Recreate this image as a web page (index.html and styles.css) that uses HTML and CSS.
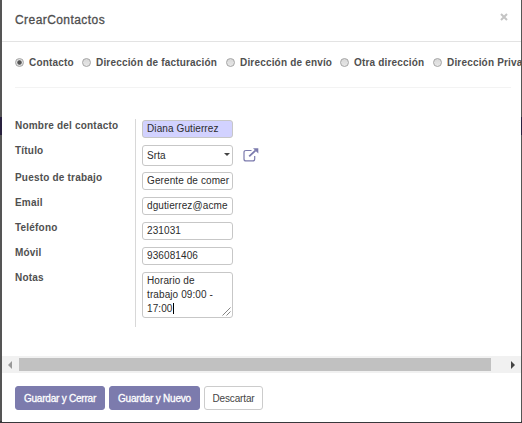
FILE: index.html
```html
<!DOCTYPE html>
<html lang="es">
<head>
<meta charset="utf-8">
<title>CrearContactos</title>
<link rel="stylesheet" href="styles.css">
</head>
<body>
<div class="modal">
  <header class="modal-header">
    <h1>CrearContactos</h1>
    <button class="close" aria-label="Cerrar"><svg width="8" height="8" viewBox="0 0 8 8"><path d="M1 1l6 6M7 1L1 7"/></svg></button>
  </header>
  <main class="modal-body">
    <div class="types">
      <label class="type t1"><i class="radio checked"></i><span>Contacto</span></label>
      <label class="type t2"><i class="radio"></i><span>Dirección de facturación</span></label>
      <label class="type t3"><i class="radio"></i><span>Dirección de envío</span></label>
      <label class="type t4"><i class="radio"></i><span>Otra dirección</span></label>
      <label class="type t5"><i class="radio"></i><span>Dirección Priva</span></label>
    </div>
    <div class="rule"></div>
    <div class="form">
      <div class="labels">
        <label>Nombre del contacto</label>
        <label class="tall">Título</label>
        <label>Puesto de trabajo</label>
        <label>Email</label>
        <label>Teléfono</label>
        <label>Móvil</label>
        <label>Notas</label>
      </div>
      <div class="fields">
        <div class="field required">Diana Gutierrez</div>
        <div class="select-row">
          <div class="field select"><span>Srta</span><i class="caret"></i></div>
          <svg class="external" width="16" height="14" viewBox="0 0 16 14"><path class="box" d="M8.5 2.5H3Q1 2.5 1 4.5V10.9Q1 12.9 3 12.9H9.7Q11.7 12.9 11.7 10.9V8"/><path class="shaft" d="M6.2 8.3L12.6 2.4"/><path class="head" d="M10 0.3H15.3V5.6Z"/></svg>
        </div>
        <div class="field">Gerente de comer</div>
        <div class="field">dgutierrez@acme</div>
        <div class="field">231031</div>
        <div class="field">936081406</div>
        <div class="field notes">Horario de<br>trabajo 09:00 -<br>17:00<i class="cursor"></i><svg class="grip" width="9" height="9" viewBox="0 0 9 9"><path d="M.5 8.5l8-8M4.5 8.5l4-4"/></svg></div>
      </div>
    </div>
  </main>
  <div class="scrollbar"><i class="arrow left"></i><div class="thumb"></div><i class="arrow right"></i></div>
  <footer class="modal-footer">
    <button class="btn primary b1">Guardar y Cerrar</button>
    <button class="btn primary b2">Guardar y Nuevo</button>
    <button class="btn b3">Descartar</button>
  </footer>
</div>
</body>
</html>
```
FILE: styles.css
```css
* { box-sizing: border-box; }
body {
  margin: 0;
  padding: 0 1px 1px 2px;
  height: 423px;
  overflow: hidden;
  background: linear-gradient(#555 0 117px, #29213f 117px 135px, #555 135px 421px, #38383b 421px);
  font-family: "Liberation Sans", Arial, sans-serif;
  color: #505050;
}
.modal {
  height: 422px;
  display: flex;
  flex-direction: column;
  background: #fff;
  overflow: hidden;
}
.modal-header {
  height: 42px;
  flex: none;
  display: flex;
  justify-content: space-between;
  padding: 12px 13px 0;
  border-bottom: 1px solid #e3e3e3;
}
h1 {
  margin: 0;
  font-size: 12px;
  line-height: 16px;
  font-weight: 400;
  letter-spacing: .43px;
  -webkit-text-stroke: .3px #4c4c4c;
}
.close {
  width: 8px;
  height: 8px;
  margin: 1px 0 0;
  padding: 0;
  border: 0;
  background: none;
  display: flex;
}
.close path { stroke: #c4c4c4; stroke-width: 2; fill: none; }
.modal-body { height: 314px; flex: none; overflow: hidden; }
.types {
  height: 45px;
  display: flex;
  padding: 13px 0 0 13px;
}
.type {
  flex: none;
  display: flex;
  align-items: center;
  gap: 5px;
  height: 14px;
  font-size: 10px;
  font-weight: 700;
  white-space: nowrap;
  letter-spacing: .18px;
}
.t1 { width: 67px; }
.t2 { width: 144px; }
.t3 { width: 114px; }
.t4 { width: 93px; }
.radio {
  flex: none;
  width: 9px;
  height: 9px;
  border: 1px solid #a4a4a4;
  border-radius: 50%;
  background: linear-gradient(#d8d8d8, #e8e8e8);
}
.checked { background: radial-gradient(circle, #555 0 1.8px, #e0e0e0 2.6px); }
.rule { height: 1px; margin: 0 10px 0 13px; background: #f3f3f3; }
.form { display: flex; margin: 31px 0 0 13px; height: 208px; }
.labels { width: 121px; border-right: 1px solid #d8d8d8; }
.labels label {
  display: block;
  height: 25px;
  font-size: 10px;
  line-height: 14px;
  font-weight: 700;
  letter-spacing: .2px;
  white-space: nowrap;
}
.labels .tall { height: 27px; }
.fields {
  padding: 1px 0 0 6px;
  display: flex;
  flex-direction: column;
  gap: 7px;
}
.field {
  width: 91px;
  height: 18px;
  border: 1px solid #c7c7c7;
  border-radius: 3px;
  padding: 0 3px 0 4px;
  font-size: 10px;
  line-height: 16px;
  letter-spacing: .1px;
  color: #2c2c2c;
  white-space: nowrap;
  background: #fff;
}
.required { background: #d2d2ff; }
.select-row { display: flex; gap: 10px; align-items: center; height: 20px; }
.select { height: 21px; line-height: 20px; display: flex; justify-content: space-between; padding-right: 2px; }
.caret {
  width: 0;
  height: 0;
  margin-top: 7px;
  border: 3px solid transparent;
  border-top-color: #444;
  border-bottom: 0;
}
.external { fill: none; stroke: #7c7bad; }
.box { stroke-width: 1.2; }
.shaft { stroke-width: 1.8; }
.head { fill: #7c7bad; stroke: none; }
.notes { position: relative; height: 46px; line-height: 14px; padding-top: 1px; }
.cursor { display: inline-block; width: 1px; height: 11px; background: #000; vertical-align: -2px; }
.grip { position: absolute; right: 1px; bottom: 1px; fill: none; stroke: #666; stroke-width: .8; }
.scrollbar {
  height: 17px;
  flex: none;
  display: flex;
  align-items: center;
  background: #f1f1f1;
  padding: 0 6px;
}
.thumb { width: 472px; height: 13px; margin-left: 7px; background: #c1c1c1; }
.arrow { width: 0; height: 0; border: 4px solid transparent; }
.left { border-right-color: #999; border-left: 0; }
.right { border-left-color: #444; border-right: 0; margin-left: auto; }
.modal-footer { display: flex; gap: 4px; padding: 13px; }
.btn {
  height: 24px;
  padding: 0;
  border: 1px solid #ccc;
  border-radius: 3px;
  background: #fff;
  color: #444;
  font: 10px "Liberation Sans", Arial, sans-serif;
  letter-spacing: -.15px;
  white-space: nowrap;
}
.primary { background: #7c7bad; border-color: #7c7bad; color: #fff; letter-spacing: -.22px; -webkit-text-stroke: .3px #fff; }
.b1 { width: 90px; }
.b2 { width: 91px; }
.b3 { width: 59px; }
```
